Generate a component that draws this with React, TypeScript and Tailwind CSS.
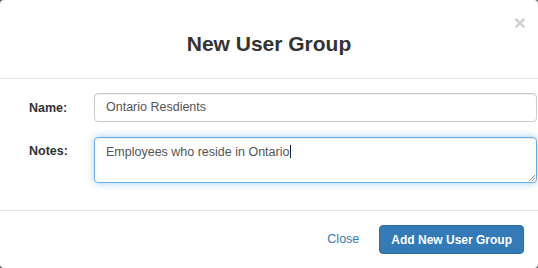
import * as React from "react";

const Field: React.FC<{ label: string; pad: string; children: React.ReactNode }> = ({
  label,
  pad,
  children,
}) => (
  <div className="flex items-start">
    <label className={`w-[94px] shrink-0 pl-[29px] ${pad} text-[12.5px] leading-[18px] font-bold text-[#333]`}>
      {label}
    </label>
    {children}
  </div>
);

const App: React.FC = () => {
  return (
    <div className="w-[538px] h-[268px] bg-[#5a5a5a] font-['Liberation_Sans',Arial,sans-serif]">
      <div className="relative flex h-full flex-col rounded-[4px] bg-white">
        {/* header */}
        <div className="h-[79px] border-b border-[#e5e5e5] pt-[32px] text-center">
          <h4 className="text-[21px] leading-[24px] font-bold text-[#333]">New User Group</h4>
        </div>
        <button className="absolute right-[12px] top-[12px] text-[21px] leading-none font-bold text-black/20">
          ×
        </button>

        {/* body */}
        <div className="h-[131px] pt-[14px]">
          <Field label="Name:" pad="pt-[6px]">
            <div className="flex h-[29px] w-[443px] items-center rounded-[4px] border border-[#ccc] px-[11px] text-[12.5px] text-[#555] shadow-[inset_0_1px_1px_rgba(0,0,0,0.075)]">
              Ontario Resdients
            </div>
          </Field>
          <div className="mt-[15px]">
            <Field label="Notes:" pad="pt-[5px]">
              <div className="relative h-[46px] w-[443px] rounded-[4px] border border-[#66afe9] px-[11px] pt-[5px] text-[12.5px] leading-[18px] text-[#555] shadow-[inset_0_1px_1px_rgba(0,0,0,0.075),0_0_8px_rgba(102,175,233,0.6)]">
                <span>Employees who reside in Ontario</span>
                <span className="ml-[1px] inline-block h-[13px] w-px translate-y-[2px] bg-[#222]" />
                {/* resize grip */}
                <svg className="absolute bottom-[1px] right-[1px]" width="7" height="7" viewBox="0 0 7 7">
                  <path d="M1 7 L7 1 M4 7 L7 4" stroke="#8a8a8a" strokeWidth="1" />
                </svg>
              </div>
            </Field>
          </div>
        </div>

        {/* footer */}
        <div className="flex flex-1 items-center justify-end gap-[20px] border-t border-[#e5e5e5] pr-[14px]">
          <button className="text-[12.5px] text-[#337ab7]">Close</button>
          <button className="h-[29px] rounded-[4px] border border-[#2e6da4] bg-[#337ab7] px-[11px] text-[12px] font-bold text-white">
            Add New User Group
          </button>
        </div>
      </div>
    </div>
  );
};

export default App;
